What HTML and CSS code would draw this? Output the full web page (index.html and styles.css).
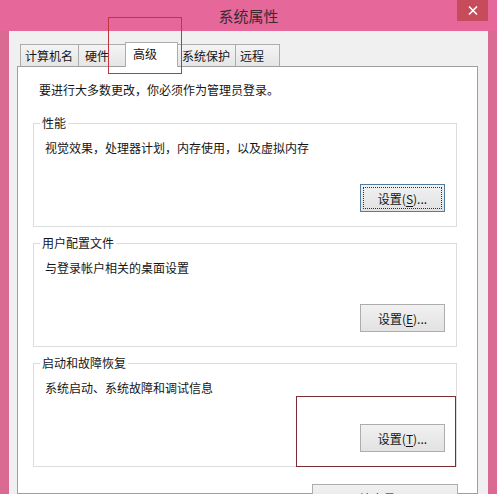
FILE: index.html
```html
<!DOCTYPE html>
<html lang="zh-CN">
<head>
<meta charset="utf-8">
<title>系统属性</title>
<link rel="stylesheet" href="styles.css">
</head>
<body>
<div class="window">
  <div class="titlebar">
    <span class="spacer"></span>
    <span class="title">系统属性</span>
    <button class="close" aria-label="关闭">
      <svg width="10" height="9" viewBox="0 0 10 9"><path d="M1 0.5 L9 8.5 M9 0.5 L1 8.5" stroke="#fff" stroke-width="1.6" fill="none"/></svg>
    </button>
  </div>
  <div class="client">
    <div class="tabs">
      <div class="tab">计算机名</div>
      <div class="tab tab-mid">硬件</div>
      <div class="tab active">高级</div>
      <div class="tab">系统保护</div>
      <div class="tab">远程</div>
    </div>
    <div class="panel">
      <p class="intro">要进行大多数更改，你必须作为管理员登录。</p>
      <fieldset class="group">
        <legend>性能</legend>
        <p class="desc">视觉效果，处理器计划，内存使用，以及虚拟内存</p>
        <div class="actions"><button class="btn focused"><span class="focus-ring">设置(<u>S</u>)...</span></button></div>
      </fieldset>
      <fieldset class="group">
        <legend>用户配置文件</legend>
        <p class="desc">与登录帐户相关的桌面设置</p>
        <div class="actions"><button class="btn">设置(<u>E</u>)...</button></div>
      </fieldset>
      <fieldset class="group">
        <legend>启动和故障恢复</legend>
        <p class="desc">系统启动、系统故障和调试信息</p>
        <div class="actions"><button class="btn">设置(<u>T</u>)...</button></div>
      </fieldset>
      <div class="bottom-actions"><button class="btn wide">环境变量(<u>N</u>)...</button></div>
    </div>
  </div>
  <div class="mark mark-tab"></div>
  <div class="mark mark-btn"></div>
</div>
</body>
</html>
```
FILE: styles.css
```css
* { box-sizing: border-box; }
html, body { margin: 0; padding: 0; }
body {
  width: 497px;
  height: 494px;
  overflow: hidden;
  font-family: "Noto Sans CJK SC", "Noto Sans", sans-serif;
  font-size: 12px;
  color: #151515;
}
.window {
  position: relative;
  width: 497px;
  height: 494px;
  background: #da6a92;
  display: flex;
  flex-direction: column;
  overflow: hidden;
}
.titlebar {
  height: 31px;
  flex: none;
  display: grid;
  grid-template-columns: 1fr auto 1fr;
  align-items: center;
  padding: 0 9px;
  background: #e6689a;
}
.title {
  font-size: 15px;
  line-height: 31px;
  color: #3b2a31;
}
.close {
  justify-self: end;
  align-self: start;
  width: 31px;
  height: 21px;
  border: 0;
  padding: 0;
  background: #c64b5b;
  display: flex;
  align-items: center;
  justify-content: center;
}
.client {
  flex: 1;
  min-height: 0;
  margin: 0 9px;
  background: #f0f0f0;
  display: flex;
  flex-direction: column;
}
.tabs {
  display: flex;
  align-items: flex-end;
  height: 24px;
  margin-top: 11px;
  padding-left: 11px;
  flex: none;
}
.tab {
  height: 22px;
  min-width: 45px;
  padding: 0 5px 0 4px;
  margin-left: -1px;
  border: 1px solid #acacac;
  border-bottom: 0;
  background: linear-gradient(#f4f4f4, #e5e5e5);
  line-height: 21px;
  white-space: nowrap;
}
.tab:first-child { margin-left: 0; }
.tab-mid { min-width: 48px; padding-left: 6px; }
.tab.active {
  position: relative;
  z-index: 1;
  height: 25px;
  min-width: 53px;
  padding-left: 7px;
  margin-bottom: -1px;
  background: #fff;
}
.panel {
  flex: 1;
  min-height: 0;
  background: #fff;
  border: 1px solid #9f9f9f;
  margin: 0 10px 0 8px;
  padding: 15px 20px 0 15px;
}
.intro {
  margin: 0 0 17px 6px;
  line-height: 16px;
}
.group {
  margin: 0;
  min-width: 0;
  border: 1px solid #dcdcdc;
  padding: 0 11px 14px;
}
.group + .group { margin-top: 8px; }
.group legend {
  padding: 0 2px;
  margin-left: -5px;
  line-height: 16px;
}
.desc {
  margin: 9px 0 0 0;
  line-height: 16px;
}
.actions {
  display: flex;
  justify-content: flex-end;
  margin-top: 28px;
}
.btn {
  width: 85px;
  height: 28px;
  padding: 0;
  border: 1px solid #adadad;
  background: linear-gradient(#f1f1f1, #e2e2e2);
  font: inherit;
  color: inherit;
  display: flex;
  align-items: center;
  justify-content: center;
}
.btn u { text-underline-offset: 2px; }
.btn.focused { border-color: #4f7d9b; }
.focus-ring {
  align-self: stretch;
  flex: 1;
  margin: 2px;
  border: 1px dotted #333;
  display: flex;
  align-items: center;
  justify-content: center;
}
.bottom-actions {
  display: flex;
  justify-content: flex-end;
  margin: 17px -1px 0 0;
}
.btn.wide { width: 146px; }
.mark {
  position: absolute;
  border: 1px solid;
  pointer-events: none;
}
.mark-tab {
  left: 108px;
  top: 17px;
  width: 74px;
  height: 57px;
  border-color: #c4343f;
}
.mark-btn {
  left: 296px;
  top: 396px;
  width: 160px;
  height: 71px;
  border-color: #7a2d33;
}
```
